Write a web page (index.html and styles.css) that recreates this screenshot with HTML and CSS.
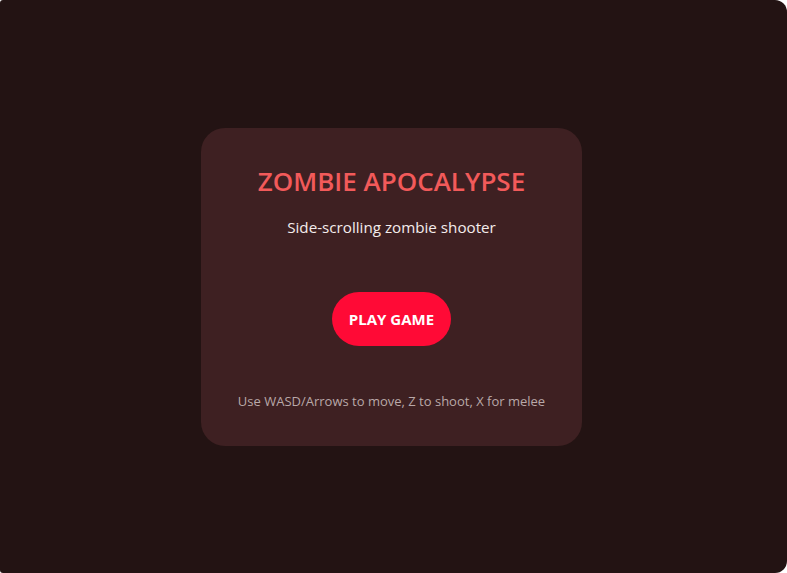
FILE: index.html
```html
<!DOCTYPE html>
<html lang="en">
<head>
<meta charset="utf-8">
<title>Zombie Apocalypse</title>
<link rel="stylesheet" href="styles.css">
</head>
<body>
<main class="screen">
  <section class="card">
    <h1 class="title">ZOMBIE APOCALYPSE</h1>
    <p class="subtitle">Side-scrolling zombie shooter</p>
    <button class="play">PLAY GAME</button>
    <p class="help">Use WASD/Arrows to move, Z to shoot, X for melee</p>
  </section>
</main>
</body>
</html>
```
FILE: styles.css
```css
html {
  background: #ffffff;
}
body {
  margin: 0;
  font-family: "Open Sans", "Noto Sans", sans-serif;
}
.screen {
  height: 573px;
  background: #231313;
  border-radius: 3px 12px 12px 3px;
  display: flex;
  align-items: center;
  justify-content: center;
}
.card {
  box-sizing: border-box;
  width: 381px;
  margin-left: -4px;
  margin-top: 1px;
  padding: 39px 20px 35px;
  background: #3e2022;
  border-radius: 24px;
  display: flex;
  flex-direction: column;
  align-items: center;
  text-align: center;
}
.title {
  margin: 0;
  font-size: 26px;
  line-height: 28px;
  font-weight: 600;
  color: #f25a5a;
}
.subtitle {
  margin: 20px 0 0;
  font-size: 15.2px;
  line-height: 24px;
  color: #f4ecec;
}
.play {
  margin-top: 53px;
  width: 119px;
  height: 54px;
  border: none;
  border-radius: 27px;
  background: #ff0a36;
  color: #ffffff;
  font-family: inherit;
  font-size: 15px;
  font-weight: 700;
  cursor: pointer;
}
.help {
  margin: 45px 0 0;
  font-size: 13px;
  line-height: 20px;
  color: #b9a8a8;
}
```
